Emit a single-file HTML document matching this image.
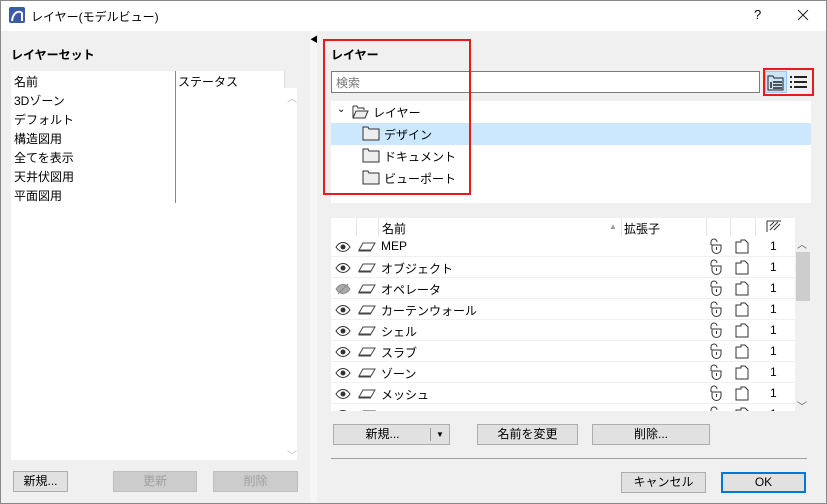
<!DOCTYPE html>
<html><head><meta charset="utf-8"><style>
*{box-sizing:border-box;margin:0;padding:0}
body{width:827px;height:504px;overflow:hidden;background:#f0f0f0;font-family:"Liberation Sans","Noto Sans CJK JP",sans-serif;font-size:12px;color:#000;position:relative}
.a{position:absolute}
.btn{position:absolute;background:#e1e1e1;border:1px solid #adadad;text-align:center;line-height:19px;font-size:12px}
.dis{color:#a0a0a0;background:#cccccc;border-color:#bfbfbf}
.row{position:absolute;left:331px;width:464px;height:21px;border-bottom:1px solid #f0f0f0;background:#fff}
.row span{position:absolute;top:3px}
</style></head><body>
<div class="a" style="left:0;top:0;width:827px;height:31px;background:#fff;border:1px solid #888;border-bottom:none"></div>
<svg class="a" style="left:9px;top:7px" width="16" height="16"><rect width="16" height="16" rx="2" fill="#3b5aa8"/><path d="M3 14 C4 5 10 3 13 6 L13 14" stroke="#fff" stroke-width="2" fill="none"/></svg>
<div class="a" style="left:31px;top:8px;font-size:12px">レイヤー(モデルビュー)</div>
<div class="a" style="left:754px;top:7px;font-size:13px">?</div>
<svg class="a" style="left:797px;top:9px" width="12" height="12"><path d="M1 1L11 11M11 1L1 11" stroke="#222" stroke-width="1"/></svg>
<div class="a" style="left:0;top:31px;width:1px;height:473px;background:#888"></div>
<div class="a" style="left:826px;top:31px;width:1px;height:473px;background:#888"></div>
<div class="a" style="left:310px;top:31px;width:7px;height:473px;background:#f6f6f6"></div>
<div class="a" style="left:310px;top:34px;font-size:8px">◀</div>
<div class="a" style="left:11px;top:46px;font-weight:bold">レイヤーセット</div>
<div class="a" style="left:11px;top:71px;width:274px;height:389px;background:#fff"></div>
<div class="a" style="left:285px;top:88px;width:12px;height:372px;background:#fff"></div>
<div class="a" style="left:175px;top:71px;width:1px;height:132px;background:#888"></div>
<div class="a" style="left:284px;top:71px;width:1px;height:17px;background:#ddd"></div>
<div class="a" style="left:14px;top:73px;line-height:19px">名前<br>3Dゾーン<br>デフォルト<br>構造図用<br>全てを表示<br>天井伏図用<br>平面図用</div>
<div class="a" style="left:178px;top:73px">ステータス</div>
<div class="a" style="left:287px;top:90px;color:#bbb;font-size:10px">︿</div>
<div class="a" style="left:287px;top:447px;color:#bbb;font-size:10px">﹀</div>
<div class="btn" style="left:13px;top:471px;width:55px;height:21px;line-height:19px">新規...</div>
<div class="btn dis" style="left:113px;top:471px;width:84px;height:21px">更新</div>
<div class="btn dis" style="left:213px;top:471px;width:85px;height:21px">削除</div>

<div class="a" style="left:331px;top:46px;font-weight:bold">レイヤー</div>
<div class="a" style="left:331px;top:71px;width:429px;height:22px;background:#fff;border:1px solid #7a7a7a;color:#777;padding:2px 4px">検索</div>
<div class="a" style="left:765px;top:71px;width:22px;height:22px;background:#cce4f7;border:1px solid #99c9ef"></div>
<svg class="a" style="left:767px;top:74px" width="18" height="17"><path d="M1 2h5l1 2h9v12H1z" fill="none" stroke="#222"/><path d="M6 8h9M6 11h9M6 14h9M4 8v6" stroke="#222" stroke-width="1.5"/></svg>
<svg class="a" style="left:789px;top:74px" width="20" height="16"><path d="M1 3h2M5 3h13M1 8h2M5 8h13M1 13h2M5 13h13" stroke="#222" stroke-width="2"/></svg>
<div class="a" style="left:763px;top:68px;width:51px;height:28px;border:2px solid #e81b1b"></div>
<div class="a" style="left:331px;top:101px;width:480px;height:102px;background:#fff"></div>
<div class="a" style="left:331px;top:123px;width:480px;height:22px;background:#cce8ff"></div>
<div class="a" style="left:337px;top:104px;font-size:10px">⌄</div>
<svg class="a" style="left:352px;top:105px" width="18" height="14"><path d="M1 1h4l1 2h6v2M1 1v12h12l3-7H4l-3 7" fill="#eee" stroke="#333"/></svg>
<div class="a" style="left:373px;top:104px">レイヤー</div>
<svg class="a" style="left:362px;top:126px" width="18" height="15"><path d="M1 1h5l1 2h10v11H1z" fill="#eee" stroke="#333"/></svg>
<div class="a" style="left:384px;top:126px">デザイン</div>
<svg class="a" style="left:362px;top:148px" width="18" height="15"><path d="M1 1h5l1 2h10v11H1z" fill="#eee" stroke="#333"/></svg>
<div class="a" style="left:384px;top:148px">ドキュメント</div>
<svg class="a" style="left:362px;top:170px" width="18" height="15"><path d="M1 1h5l1 2h10v11H1z" fill="#eee" stroke="#333"/></svg>
<div class="a" style="left:384px;top:170px">ビューポート</div>
<div class="a" style="left:323px;top:39px;width:148px;height:156px;border:2px solid #e81b1b"></div>

<div class="a" style="left:331px;top:218px;width:464px;height:18px;background:#fff"></div>
<div class="a" style="left:356px;top:218px;width:1px;height:18px;background:#e5e5e5"></div>
<div class="a" style="left:378px;top:218px;width:1px;height:18px;background:#e5e5e5"></div>
<div class="a" style="left:621px;top:218px;width:1px;height:18px;background:#e5e5e5"></div>
<div class="a" style="left:706px;top:218px;width:1px;height:18px;background:#e5e5e5"></div>
<div class="a" style="left:730px;top:218px;width:1px;height:18px;background:#e5e5e5"></div>
<div class="a" style="left:755px;top:218px;width:1px;height:18px;background:#e5e5e5"></div>
<div class="a" style="left:382px;top:220px">名前</div>
<div class="a" style="left:609px;top:222px;font-size:8px;color:#999">▲</div>
<div class="a" style="left:624px;top:220px">拡張子</div>
<svg class="a" style="left:766px;top:220px" width="16" height="12"><path d="M1 1h14M1 1v11M4 6l4-4M4 10l8-8M8 10l6-6" stroke="#333" fill="none"/></svg>
<div class="a" style="left:795px;top:236px;width:16px;height:176px;background:#f0f0f0"></div>
<div class="a" style="left:796px;top:252px;width:14px;height:49px;background:#cdcdcd"></div>
<div class="a" style="left:797px;top:236px;font-size:10px;color:#555">︿</div>
<div class="a" style="left:797px;top:398px;font-size:10px;color:#555">﹀</div>

<div id="rows"></div>
<script>
var n=["MEP","オブジェクト","オペレータ","カーテンウォール","シェル","スラブ","ゾーン","メッシュ","モルフ"];
var h="";
for(var i=0;i<9;i++){var y=236+i*21;var hgt=i==8?176-168:21;
var eye=i==2?'<path d="M1 6c4-6 10-6 14 0c-4 6-10 6-14 0z" fill="#aaa" stroke="#888"/><path d="M3 11L13 1" stroke="#888"/>':'<path d="M1 6c4-6 10-6 14 0c-4 6-10 6-14 0z" fill="#fff" stroke="#333"/><circle cx="8" cy="6" r="2.5" fill="#333"/>';
h+='<div class="row" style="top:'+y+'px;height:'+hgt+'px;overflow:hidden"><svg style="position:absolute;left:4px;top:5px" width="16" height="12">'+eye+'</svg><svg style="position:absolute;left:27px;top:6px" width="18" height="10"><path d="M5 1h12l-4 7H1z M1 8v1h12" fill="none" stroke="#444"/></svg><span style="left:50px">'+n[i]+'</span><svg style="position:absolute;left:378px;top:2px" width="14" height="16"><path d="M2 7V4a3 3 0 0 1 6 0" fill="none" stroke="#333"/><path d="M3 7h9v4a4 4 0 0 1-9 0z" fill="none" stroke="#333"/><path d="M7.5 9v3" stroke="#333"/></svg><svg style="position:absolute;left:404px;top:3px" width="14" height="15"><path d="M1 3h5V1h4l3 3v10H1z" fill="none" stroke="#333"/></svg><span style="left:439px">1</span></div>';}
document.getElementById("rows").innerHTML=h;
</script>

<div class="btn" style="left:333px;top:424px;width:98px;height:21px;border-right:none;border-top-right-radius:0">新規...</div>
<div class="btn" style="left:430px;top:424px;width:20px;height:21px;border-left:none;font-size:8px"><span style="border-left:1px solid #999;display:block;height:13px;margin-top:3px;line-height:13px">▼</span></div>
<div class="btn" style="left:477px;top:424px;width:101px;height:21px">名前を変更</div>
<div class="btn" style="left:592px;top:424px;width:118px;height:21px">削除...</div>
<div class="a" style="left:331px;top:458px;width:476px;height:1px;background:#a0a0a0"></div>
<div class="btn" style="left:621px;top:472px;width:85px;height:21px">キャンセル</div>
<div class="btn" style="left:721px;top:472px;width:85px;height:21px;border:2px solid #0078d7;line-height:17px">OK</div>
<div class="a" style="left:0;top:503px;width:827px;height:1px;background:#888"></div>
</body></html>
